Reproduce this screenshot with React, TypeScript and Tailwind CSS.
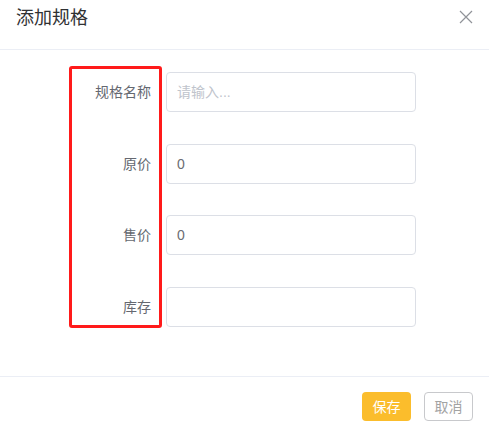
const fields = [
  { label: "规格名称", value: "", placeholder: "请输入..." },
  { label: "原价", value: "0", placeholder: "" },
  { label: "售价", value: "0", placeholder: "" },
  { label: "库存", value: "", placeholder: "" },
];

export default function App() {
  return (
    <div
      className="w-[489px] h-[425px] bg-white relative overflow-hidden"
      style={{ fontFamily: '"Liberation Sans", "Noto Sans CJK SC", sans-serif' }}
    >
      {/* Header */}
      <div className="h-[50px] flex items-center justify-between pl-4 pr-[16px] border-b border-[#ebeef5]">
        <span className="text-[18px] text-[#303133] -mt-[12px]">添加规格</span>
        <svg className="w-[14px] h-[14px] -mt-[16px]" viewBox="0 0 14 14" fill="none" stroke="#909399" strokeWidth="1.2">
          <path d="M1 1L13 13M13 1L1 13" />
        </svg>
      </div>

      {/* Form */}
      <div className="relative h-[326px] pt-[22px]">
        <div className="flex flex-col gap-[31.5px]">
          {fields.map((f) => (
            <div key={f.label} className="flex items-center h-[40px] pl-[69px]">
              <label className="w-[82px] text-right text-sm text-[#656870]">{f.label}</label>
              <input
                className="ml-[15px] w-[250px] h-[40px] rounded border border-[#dcdfe6] px-[10px] text-sm text-[#6b6d72] placeholder:text-[#c0c4cc] outline-none"
                defaultValue={f.value}
                placeholder={f.placeholder}
              />
            </div>
          ))}
        </div>
        {/* highlight */}
        <div className="absolute left-[69px] top-[16px] w-[93px] h-[262px] border-[3px] border-[#ff1a1a] rounded-[3px]" />
      </div>

      {/* Footer */}
      <div className="border-t border-[#ebeef5] flex justify-end gap-[13px] pr-[16px] pt-[15px]">
        <button className="w-[49px] h-[29px] rounded bg-[#fbbd2c] text-white text-sm">保存</button>
        <button className="w-[49px] h-[29px] rounded border border-[#c8c9cc] text-[#a3a3a3] text-sm">取消</button>
      </div>
    </div>
  );
}
